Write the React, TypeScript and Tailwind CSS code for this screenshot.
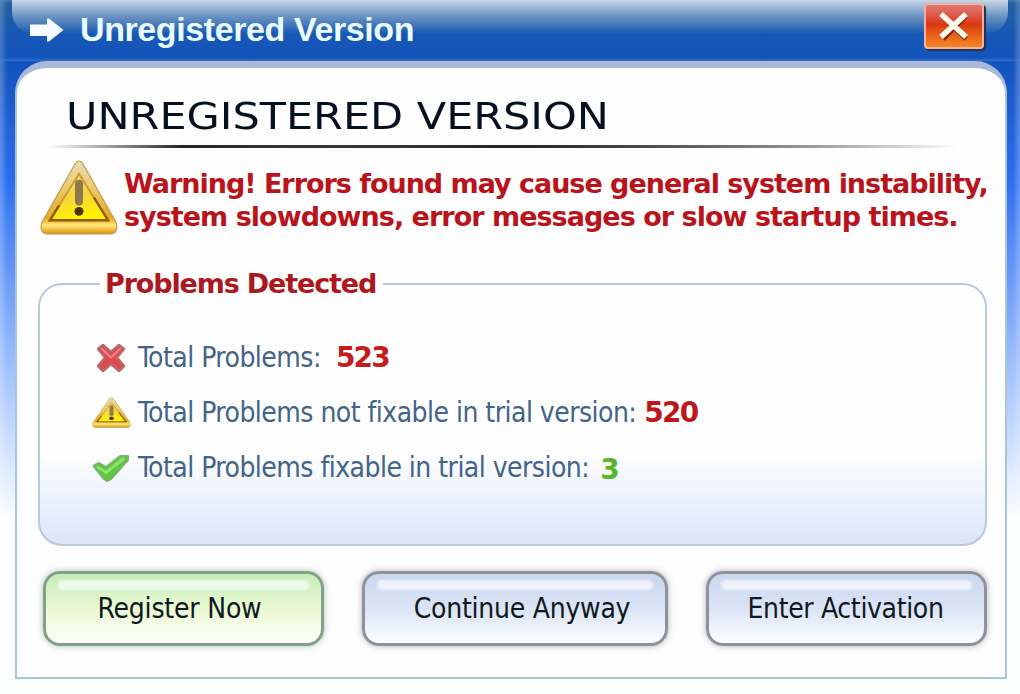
import React from 'react'

type Tone = 'green' | 'blue'

const toneStyles: Record<Tone, string> = {
  green:
    'border-[#83a088] bg-linear-to-b from-[#c5edbb] via-[#e9f8d2] to-[#fefffa] shadow-[0_0_6px_rgba(90,140,100,0.5)]',
  blue:
    'border-[#8d929f] bg-linear-to-b from-[#cad7ee] via-[#dae4f5] to-[#fcfdff] shadow-[0_0_6px_rgba(100,100,110,0.5)]',
}

function WarningIcon({ id, className }: { id: string; className: string }) {
  return (
    <svg viewBox="0 0 78 76" preserveAspectRatio="none" className={className}>
      <defs>
        <linearGradient id={`${id}-rim`} x1="0" y1="0" x2="0" y2="1">
          <stop offset="0" stopColor="#e8dfb8" />
          <stop offset="0.4" stopColor="#edc864" />
          <stop offset="0.78" stopColor="#e9a91e" />
          <stop offset="0.88" stopColor="#ffe779" />
          <stop offset="1" stopColor="#dc9212" />
        </linearGradient>
        <linearGradient id={`${id}-fill`} x1="0" y1="0" x2="0.3" y2="1">
          <stop offset="0" stopColor="#f3dc80" />
          <stop offset="0.55" stopColor="#f5d540" />
          <stop offset="1" stopColor="#fff200" />
        </linearGradient>
      </defs>
      <path
        d="M35 4 Q39 -2 43 4 L76 63 Q79 74 71 75 H7 Q-1 74 2 63 Z"
        fill={`url(#${id}-rim)`}
        stroke="#bd9a52"
        strokeWidth="1.2"
      />
      <path d="M39 14 L68 61 H10 Z" fill={`url(#${id}-fill)`} stroke="#d09a35" strokeWidth="2" />
      <path d="M19 46 L10 61 H68 L54 38" fill="none" stroke="#8f5a08" strokeWidth="2.4" />
      <path d="M39 24 V42" stroke="#8f784e" strokeWidth="8" strokeLinecap="round" />
      <circle cx="39" cy="52" r="4.5" fill="#4f3305" />
    </svg>
  )
}

function CrossIcon() {
  return (
    <svg viewBox="0 0 30 30" className="ml-1 h-[30px] w-[30px]">
      <path
        d="M7 2 L15 9 L23 2 L28 6 L21 14.500 L28 23 L23 28 L15 21 L7 28 L2 23 L9 14.500 L2 6 Z"
        fill="#e0484d"
        stroke="#b9686c"
        strokeWidth="2.500"
        strokeLinejoin="round"
      />
      <path d="M6 6 L15 14.500 L24 6" fill="none" stroke="#f28583" strokeWidth="2" strokeLinecap="round" />
    </svg>
  )
}

function CheckIcon() {
  return (
    <svg viewBox="0 0 38 28" className="h-7 w-[38px]">
      <path
        d="M1.500 12 L7 9 L14 13 L28 2 L36 2 V6 L19 25 L15 27 L12 25 Z"
        fill="#5cc83f"
        stroke="#75b667"
        strokeWidth="2"
        strokeLinejoin="round"
      />
      <path d="M6 13 L14 18.500 L31 5" fill="none" stroke="#8fe070" strokeWidth="3" strokeLinecap="round" />
    </svg>
  )
}

function ArrowIcon() {
  return (
    <svg viewBox="0 0 34 24" className="h-6 w-[34px]">
      <path d="M0 6.500 H17 V0.500 H19 L33.500 12 L19 23.500 H17 V18 H0 Z" fill="#f4fcff" />
    </svg>
  )
}

interface DialogButtonProps {
  label: string
  tone: Tone
  className: string
  textClassName: string
}

function DialogButton({ label, tone, className, textClassName }: DialogButtonProps) {
  return (
    <button
      className={`relative flex h-[75px] shrink-0 items-center justify-center rounded-[17px] border-[3px] ${toneStyles[tone]} ${className}`}
    >
      <span className="absolute inset-x-3 top-1.5 h-2.5 rounded-full bg-white/65 blur-[1px]" />
      <span
        className={`relative whitespace-nowrap font-['DejaVu_Sans_Condensed','DejaVu_Sans',sans-serif] text-[28px] leading-none text-[#101820] ${textClassName}`}
      >
        {label}
      </span>
    </button>
  )
}

interface ProblemRowProps {
  icon: React.ReactNode
  label: string
  count: number
  countClassName: string
}

function ProblemRow({ icon, label, count, countClassName }: ProblemRowProps) {
  return (
    <div className="flex h-[55px] items-center whitespace-nowrap">
      <div className="w-[46px] shrink-0">{icon}</div>
      <span className="shrink-0 font-['DejaVu_Sans_Condensed','DejaVu_Sans',sans-serif] text-[28px] leading-none tracking-[-0.53px] text-[#426488]">
        {label}
      </span>
      <span
        className={`font-['DejaVu_Sans',sans-serif] text-[28px] leading-none font-bold tracking-[-1.8px] ${countClassName}`}
      >
        {count}
      </span>
    </div>
  )
}

function TitleBar() {
  return (
    <header className="relative h-[61px] bg-linear-to-b from-[#23619f] via-[#1858b2] to-[#1253bd] shadow-[inset_4px_0_4px_rgba(255,255,255,0.2),inset_-4px_0_4px_rgba(255,255,255,0.2)]">
      {/* glass highlight along the top edge */}
      <div className="absolute inset-x-3 top-0 h-[34px] rounded-b-[22px] bg-linear-to-b from-[#c6d6e8] via-[#8aa9cd]/75 via-45% to-transparent" />
      <div className="relative flex items-start pl-[30px]">
        <div className="mt-[18px]">
          <ArrowIcon />
        </div>
        <span className="mt-[11px] ml-4 whitespace-nowrap font-['Liberation_Sans',sans-serif] text-[34px] leading-[36px] font-bold tracking-[-0.4px] text-[#e9fbff]">
          Unregistered Version
        </span>
        <button className="mt-[3px] mr-9 ml-auto flex h-[46px] w-[60px] items-center justify-center rounded-[4px] border-2 border-[#f4b0a4] bg-linear-to-b from-[#df7874] from-0% via-[#d93611] via-45% to-[#f58624] shadow-[2px_2px_1px_#27304a]">
          <svg viewBox="0 0 32 32" className="h-8 w-8">
            <path d="M5 6 L28 29 M28 6 L5 29" stroke="#7d2815" strokeWidth="5" />
            <path d="M3 4 L28 27 M28 4 L3 27" stroke="#fff8ec" strokeWidth="5.500" />
          </svg>
        </button>
      </div>
    </header>
  )
}

function App() {
  return (
    <div className="relative h-[694px] w-[1020px] overflow-hidden bg-linear-to-b from-[#1253bd] from-9% via-[#2c6df0] via-26% to-[#fdfefe] to-75% shadow-[inset_4px_0_4px_rgba(255,255,255,0.25),inset_-4px_0_4px_rgba(255,255,255,0.25)]">
      <TitleBar />
      <main className="relative mr-[13px] ml-[15px] h-[618px] rounded-t-[32px] border-2 border-t-[7px] border-[#abc4d8] border-t-[#a9b9d8] bg-[#fefefe] px-[21px]">
        <h1 className="mt-[26px] ml-[28px] w-fit origin-left scale-x-[1.13] whitespace-nowrap font-['DejaVu_Sans',sans-serif] text-[38px] leading-[44px] text-[#07101f]">
          UNREGISTERED VERSION
        </h1>
        <div className="mt-[7px] ml-[10px] h-[3px] w-[910px] bg-linear-to-r from-transparent via-[#20242b] via-15% to-transparent">
          <div className="h-full w-full bg-linear-to-r from-transparent from-10% via-[#20242b] via-50% to-transparent" />
        </div>

        <div className="mt-3 flex h-[76px]">
          <WarningIcon id="big" className="ml-0.5 h-[75px] w-[78px] shrink-0" />
          <p className="mt-[7px] ml-1.5 whitespace-nowrap font-['DejaVu_Sans',sans-serif] text-[27px] leading-[33px] font-bold text-[#b9141b]">
            <span className="block tracking-[-1.02px]">Warning! Errors found may cause general system instability,</span>
            <span className="block tracking-[-0.97px]">system slowdowns, error messages or slow startup times.</span>
          </p>
        </div>

        <fieldset className="mt-[31px] h-[279px] w-[949px] rounded-[24px] border-2 border-[#b9c9dd] bg-linear-to-b from-transparent from-65% to-[#dae6fa] pl-[52px]">
          <legend className="ml-2 h-[34px] pr-[7px] pl-[5px] whitespace-nowrap font-['DejaVu_Sans',sans-serif] text-[27px] leading-[34px] font-bold tracking-[-1.15px] text-[#ad1820]">
            Problems Detected
          </legend>
          <div className="mt-[29px]">
            <ProblemRow
              icon={<CrossIcon />}
              label="Total Problems:"
              count={523}
              countClassName="ml-[15px] text-[#c71c1c]"
            />
            <ProblemRow
              icon={<WarningIcon id="small" className="h-[31px] w-[39px]" />}
              label="Total Problems not fixable in trial version:"
              count={520}
              countClassName="ml-2 text-[#bd171c]"
            />
            <ProblemRow
              icon={<CheckIcon />}
              label="Total Problems fixable in trial version:"
              count={3}
              countClassName="ml-[11px] mt-1 text-[#58b72b]"
            />
          </div>
        </fieldset>

        <div className="mt-[25px] ml-[5px] flex">
          <DialogButton label="Register Now" tone="green" className="w-[281px] pr-2" textClassName="tracking-[-0.2px]" />
          <DialogButton
            label="Continue Anyway"
            tone="blue"
            className="ml-[38px] w-[306px] pl-3.5"
            textClassName="tracking-[-0.25px]"
          />
          <DialogButton
            label="Enter Activation"
            tone="blue"
            className="ml-[38px] w-[281px] pr-0.5"
            textClassName="tracking-[-0.35px]"
          />
        </div>
      </main>
    </div>
  )
}

export default App
